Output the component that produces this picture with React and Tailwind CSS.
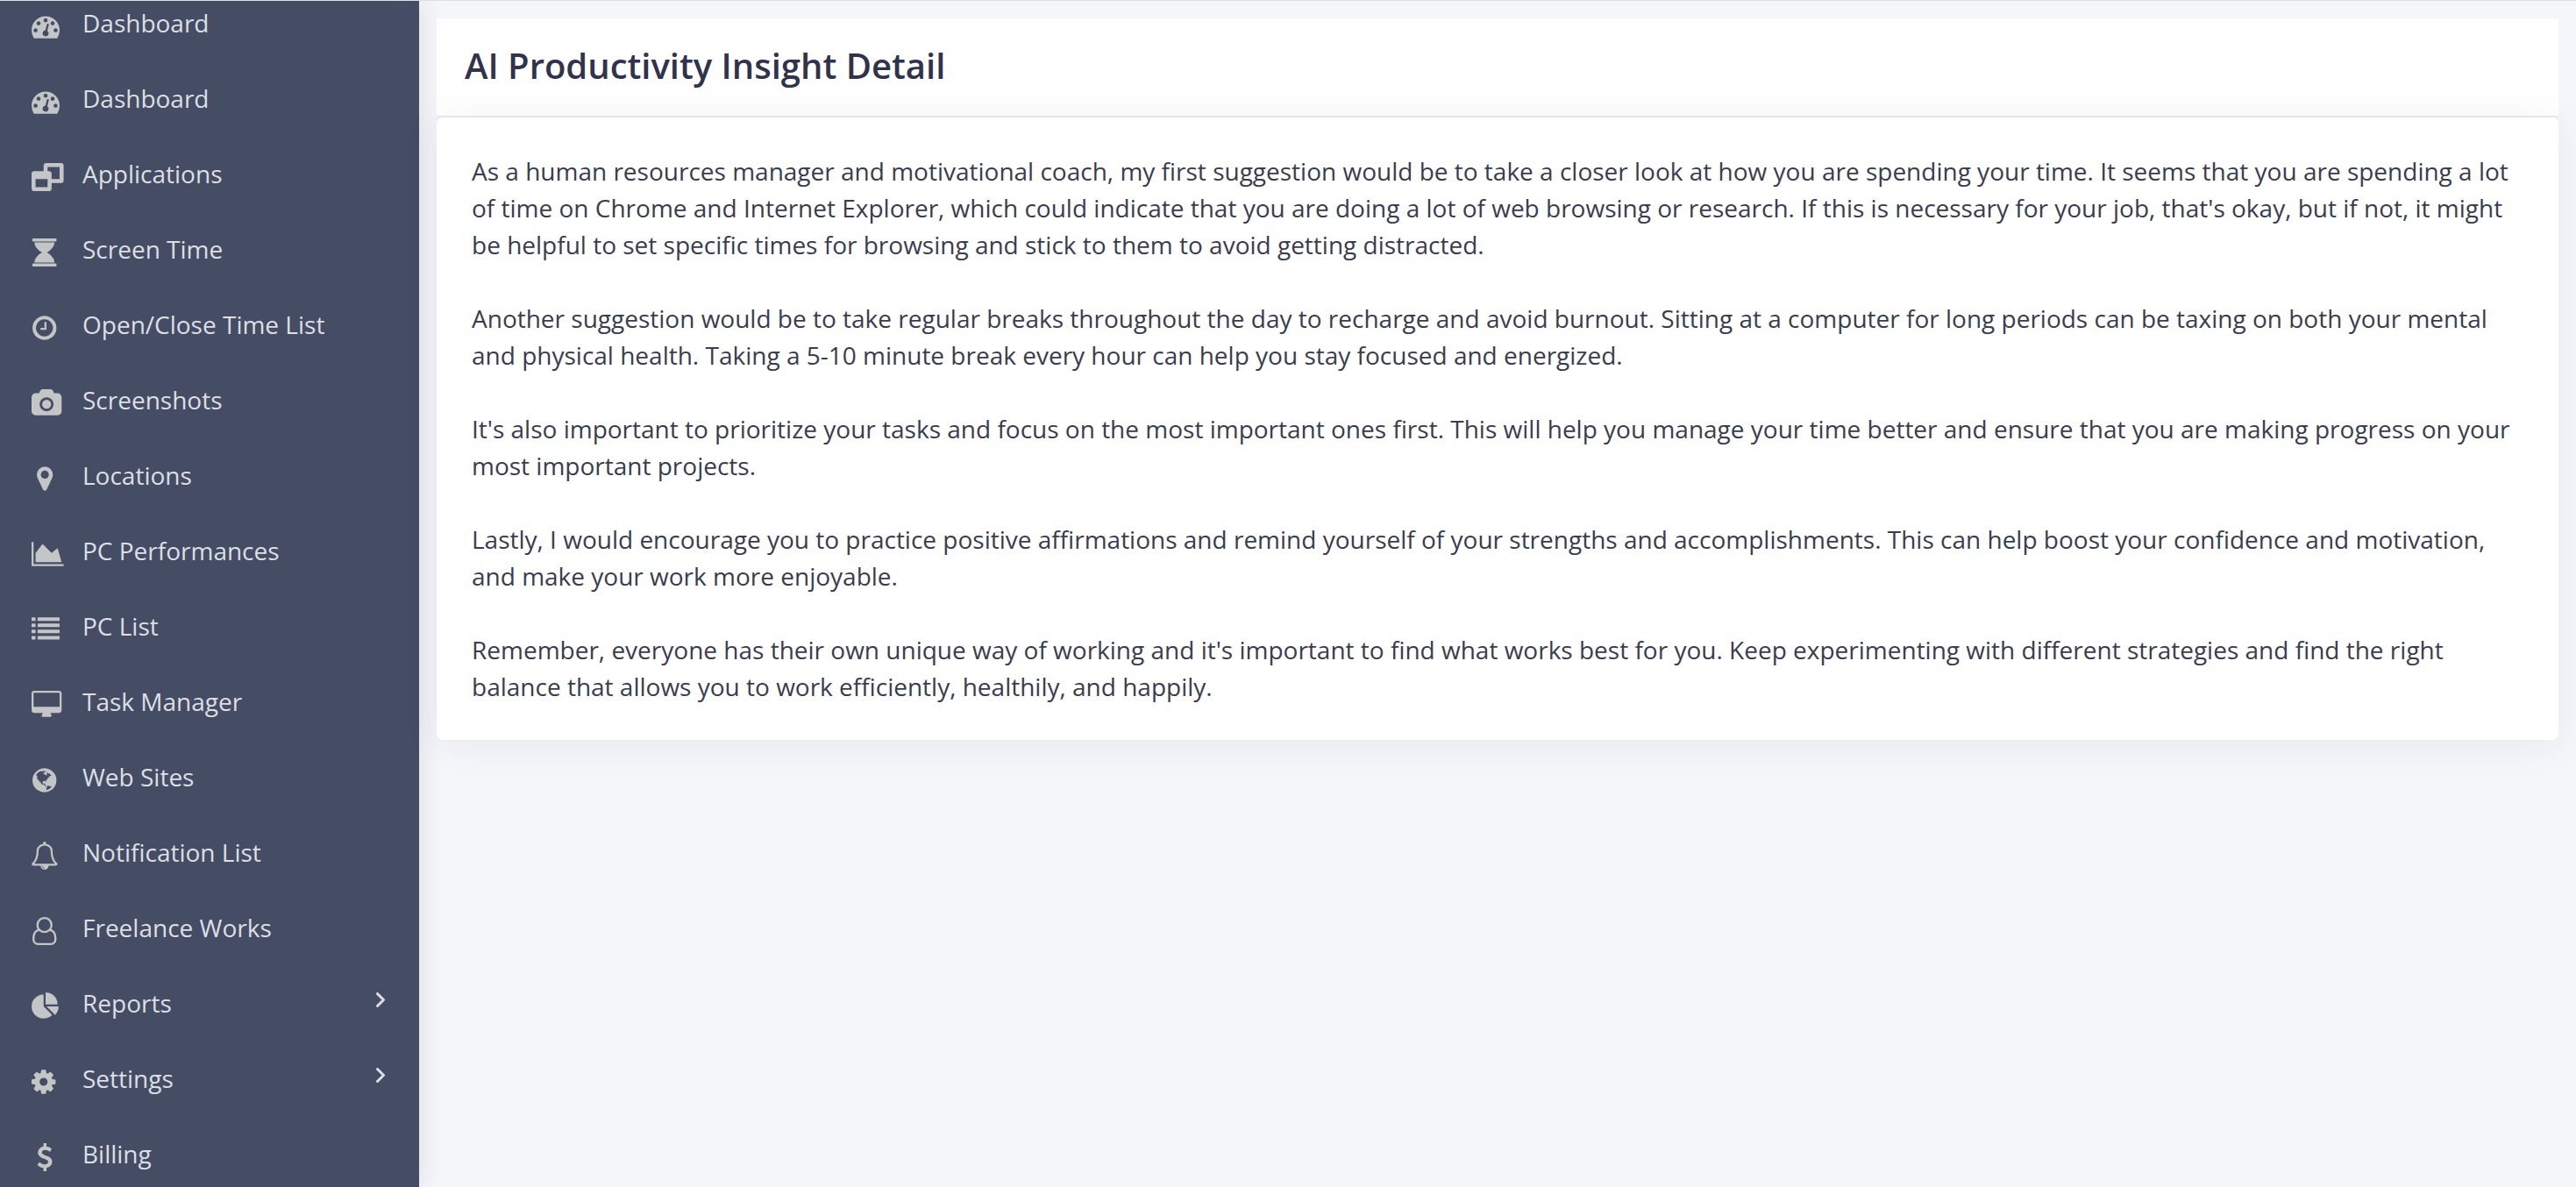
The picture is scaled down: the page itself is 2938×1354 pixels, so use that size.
import React from 'react';

// Icon outlines drawn on a 1792-unit em, 56 units per pixel at 32px
const icons = {
  tachometer: {
    width: 1792,
    d: 'M384 1152q0-53-37.5-90.5t-90.5-37.5-90.5 37.5-37.5 90.5 37.5 90.5 90.5 37.5 90.5-37.5 37.5-90.5zm192-448q0-53-37.5-90.5t-90.5-37.5-90.5 37.5-37.5 90.5 37.5 90.5 90.5 37.5 90.5-37.5 37.5-90.5zm428 481l101-382q6-26-7.5-48.5t-38.5-29.5-48 6.5-30 39.5l-101 382q-60 5-107 43.5t-63 98.5q-20 77 20 146t117 89 146-20 89-117q16-60-6-117t-72-91zm660-33q0-53-37.5-90.5t-90.5-37.5-90.5 37.5-37.5 90.5 37.5 90.5 90.5 37.5 90.5-37.5 37.5-90.5zm-640-640q0-53-37.5-90.5t-90.5-37.5-90.5 37.5-37.5 90.5 37.5 90.5 90.5 37.5 90.5-37.5 37.5-90.5zm448 192q0-53-37.5-90.5t-90.5-37.5-90.5 37.5-37.5 90.5 37.5 90.5 90.5 37.5 90.5-37.5 37.5-90.5zm320 448q0 261-141 483-19 29-54 29h-1402q-35 0-54-29-141-221-141-483 0-182 71-348t191-286 286-191 348-71 348 71 286 191 191 286 71 348z',
  },
  windows: {
    width: 2048,
    d: 'M256 1536h768v-512h-768v512zm1024-512h512v-768h-768v256h96q66 0 113 47t47 113v352zm768-864v960q0 66-47 113t-113 47h-608v352q0 66-47 113t-113 47h-960q-66 0-113-47t-47-113v-960q0-66 47-113t113-47h608v-352q0-66 47-113t113-47h960q66 0 113 47t47 113z',
  },
  hourglass: {
    width: 1536,
    d: 'M1504 1600q14 0 23 9t9 23v128q0 14-9 23t-23 9h-1472q-14 0-23-9t-9-23v-128q0-14 9-23t23-9h1472zm-1374-64q3-55 16-107t30-95 46-87 53.5-76 64.5-69.5 66-60 70.5-55 66.5-47.5 65-43q-43-28-65-43t-66.5-47.5-70.5-55-66-60-64.5-69.5-53.5-76-46-87-30-95-16-107h1276q-3 55-16 107t-30 95-46 87-53.5 76-64.5 69.5-66 60-70.5 55-66.5 47.5-65 43q43 28 65 43t66.5 47.5 70.5 55 66 60 64.5 69.5 53.5 76 46 87 30 95 16 107h-1276zm1374-1536q14 0 23 9t9 23v128q0 14-9 23t-23 9h-1472q-14 0-23-9t-9-23v-128q0-14 9-23t23-9h1472z',
  },
  clock: {
    width: 1536,
    d: 'M896 544v448q0 14-9 23t-23 9h-320q-14 0-23-9t-9-23v-64q0-14 9-23t23-9h224v-352q0-14 9-23t23-9h64q14 0 23 9t9 23zm416 352q0-148-73-273t-198-198-273-73-273 73-198 198-73 273 73 273 198 198 273 73 273-73 198-198 73-273zm224 0q0 209-103 385.5t-279.5 279.5-385.5 103-385.5-103-279.5-279.5-103-385.5 103-385.5 279.5-279.5 385.5-103 385.5 103 279.5 279.5 103 385.5z',
  },
  camera: {
    width: 1920,
    d: 'M960 672q119 0 203.5 84.5t84.5 203.5-84.5 203.5-203.5 84.5-203.5-84.5-84.5-203.5 84.5-203.5 203.5-84.5zm704-416q106 0 181 75t75 181v896q0 106-75 181t-181 75h-1408q-106 0-181-75t-75-181v-896q0-106 75-181t181-75h224l51-136q19-49 69.5-84.5t103.5-35.5h512q53 0 103.5 35.5t69.5 84.5l51 136h224zm-704 1152q185 0 316.5-131.5t131.5-316.5-131.5-316.5-316.5-131.5-316.5 131.5-131.5 316.5 131.5 316.5 316.5 131.5z',
  },
  marker: {
    width: 1024,
    d: 'M768 640q0-106-75-181t-181-75-181 75-75 181 75 181 181 75 181-75 75-181zm256 0q0 109-33 179l-364 774q-16 33-47.5 52t-67.5 19-67.5-19-46.5-52l-365-774q-33-70-33-179 0-212 150-362t362-150 362 150 150 362z',
  },
  areaChart: {
    width: 2048,
    d: 'M2048 1536v128h-2048v-1536h128v1408h1920zm-384-1024l256 896h-1664v-576l448-576 576 576z',
  },
  list: {
    width: 1792,
    d: 'M32 128h192q32 0 32 32v160q0 32-32 32h-192q-32 0-32-32v-160q0-32 32-32zm0 394h192q32 0 32 32v160q0 32-32 32h-192q-32 0-32-32v-160q0-32 32-32zm0 394h192q32 0 32 32v160q0 32-32 32h-192q-32 0-32-32v-160q0-32 32-32zm0 394h192q32 0 32 32v160q0 32-32 32h-192q-32 0-32-32v-160q0-32 32-32zM416 128h1344q32 0 32 32v160q0 32-32 32h-1344q-32 0-32-32v-160q0-32 32-32zm0 394h1344q32 0 32 32v160q0 32-32 32h-1344q-32 0-32-32v-160q0-32 32-32zm0 394h1344q32 0 32 32v160q0 32-32 32h-1344q-32 0-32-32v-160q0-32 32-32zm0 394h1344q32 0 32 32v160q0 32-32 32h-1344q-32 0-32-32v-160q0-32 32-32z',
  },
  desktop: {
    width: 1920,
    d: 'M1792 992v-832q0-13-9.5-22.5t-22.5-9.5h-1600q-13 0-22.5 9.5t-9.5 22.5v832q0 13 9.5 22.5t22.5 9.5h1600q13 0 22.5-9.5t9.5-22.5zm128-832v1088q0 66-47 113t-113 47h-544q0 37 16 77.5t32 71 16 43.5q0 26-19 45t-45 19h-512q-26 0-45-19t-19-45q0-14 16-44t32-70 16-78h-544q-66 0-113-47t-47-113v-1088q0-66 47-113t113-47h1600q66 0 113 47t47 113z',
  },
  globe: {
    width: 1536,
    d: 'M768 128q209 0 385.5 103t279.5 279.5 103 385.5-103 385.5-279.5 279.5-385.5 103-385.5-103-279.5-279.5-103-385.5 103-385.5 279.5-279.5 385.5-103zm274 521q-2 1-9.5 9.5t-13.5 9.5q2 0 4.5-5t5-11 3.5-7q6-7 22-15 14-6 52-12 34-8 51 11-2-2 9.5-13t14.5-12q3-2 15-4.5t15-7.5l2-22q-12 1-17.5-7t-6.5-21q0 2-6 8 0-7-4.5-8t-11.5 1-9 1q-10-3-15-7.5t-8-16.5-4-15q-2-5-9.5-11t-9.5-10q-1-2-2.5-5.5t-3-6.5-4-5.5-5.5-2.5-7 5-7.5 10-4.5 5q-3-2-6-1.5t-4.5 1-4.5 3-5 3.5q-3 2-8.5 3t-8.5 2q15-5-1-11-10-4-16-3 9-4 7.5-12t-8.5-14h5q-1-4-8.5-8.5t-17.5-8.5-13-6q-8-5-34-9.5t-33-.5q-5 6-4.5 10.5t4 14 3.5 12.5q1 6-5.5 13t-6.5 12q0 7 14 15.5t10 21.5q-3 8-16 16t-16 12q-5 8-1.5 18.5t10.5 16.5q2 2 1.5 4t-3.5 4.5-5.5 4-6.5 3.5l-3 2q-11 5-20.5-6t-13.5-26q-7-25-16-30-23-8-29 1-5-13-41-26-25-9-58-4 6-1 0-15-7-15-19-12 3-6 4-17.5t1-13.5q3-13 12-23 1-1 7-8.5t9.5-13.5.5-6q35 4 50-11 5-5 11.5-17t10.5-17q9-6 14-5.5t14.5 5.5 14.5 5q14 1 15.5-11t-7.5-20q12 1 3-17-4-7-8-9-12-4-27 5-8 4 2 8-1-1-9.5 10.5t-16.5 17.5-16-5q-1-1-5.5-13.5t-9.5-13.5q-8 0-16 15 3-8-11-15t-24-8q19-12-8-27-7-4-20.5-5t-19.5 4q-5 7-5.5 11.5t5 8 10.5 5.5 11.5 4 8.5 3q14 10 8 14-2 1-8.5 3.5t-11.5 4.5-6 4q-3 4 0 14t-2 14q-5-5-9-17.5t-7-16.5q7 9-25 6l-10-1q-4 0-16 2t-20.5 1-13.5-8q-4-8 0-20 1-4 4-2-4-3-11-9.5t-10-8.5q-46 15-94 41 6 1 12-1 5-2 13-6.5t10-5.5q34-14 42-7l5-5q14 16 20 25-7-4-30-1-20 6-22 12 7 12 5 18-4-3-11.5-10t-14.5-11-15-5q-16 0-22 1-146 80-235 222 7 7 12 8 4 1 5 9t2.5 11 11.5-3q9 8 3 19 1-1 44 27 19 17 21 21 3 11-10 18-1-2-9-9t-9-4q-3 5 .5 18.5t10.5 12.5q-7 0-9.5 16t-2.5 35.5-1 23.5l2 1q-3 12 5.5 34.5t21.5 19.5q-13 3 20 43 6 8 8 9 3 2 12 7.5t15 10 10 10.5q4 5 10 22.5t14 23.5q-2 6 9.5 20t10.5 23q-1 0-2.5 1t-2.5 1q3 7 15.5 14t15.5 13q1 3 2 10t3 11 8 2q2-20-24-62-15-25-17-29-3-5-5.5-15.5t-4.5-14.5q2 0 6 1.5t8.5 3.5 7.5 4 2 3q-3 7 2 17.5t12 18.5 17 19 12 13q6 6 14 19.5t0 13.5q9 0 20 10.5t17 19.5q5 8 8 26t5 24q2 7 8.5 13.5t12.5 9.5l16 8 13 7q5 2 18.5 10.5t21.5 11.5q10 4 16 4t14.5-2.5 13.5-3.5q15-2 29 15t21 21q36 19 55 11-2 1 .5 7.5t8 15.5 9 14.5 5.5 8.5q5 6 18 15t18 15q6-4 7-9-3 8 7 20t18 10q14-3 14-32-31 15-49-18 0-1-2.5-5.5t-4-8.5-2.5-8.5 0-7.5 5-3q9 0 10-3.500t-2-12.500-4-13q-1-8-11-20t-12-15q-5 9-16 8t-16-9q0 1-1.5 5.5t-1.5 6.5q-13 0-15-1 1-3 2.500-17.500t3.500-22.500q1-4 5.500-12t7.500-14.500 4-12.500-4.500-9.500-17.500-2.500q-19 1-26 20-1 3-3 10.500t-5 11.500-9 7q-7 3-24 2t-24-5q-13-8-22.500-29t-9.500-37q0-10 2.500-26.500t3-25-5.500-24.500q3-2 9-9.500t10-10.500q2-1 4.500-1.500t4.500 0 4-1.500 3-6q-1-1-4-3-3-3-4-3 7 3 28.500-1.500t27.500 1.500q15 11 22-2 0-1-2.500-9.500t-.5-13.500q5 27 29 9 3 3 15.500 5t17.500 5q3 2 7 5.500t5.500 4.500 5-.5 8.500-6.500q10 14 12 24 11 40 19 44 7 3 11 2t4.500-9.500 0-14-1.500-12.500l-1-8v-18l-1-8q-15-3-18.500-12t1.500-18.500 15-18.500q1-1 8-3.500t15.500-6.500 12.500-8q21-19 15-35 7 0 11-9-1 0-5-3t-7.500-5-4.500-2q9-5 2-16 5-3 7.500-11t7.500-10q9 12 21 2 8-8 1-16 5-7 20.500-10.500t18.500-9.500q7 2 8-2t1-12 3-12q4-5 15-9t13-5l17-11q3-4 0-4 18 2 31-11 10-11-6-20 3-6-3-9.500t-15-5.500q3-1 11.500-.5t10.500-1.500q15-10-7-16-17-5-43 12zm-163 877q206-36 351-189-3-3-12.500-4.500t-12.500-3.500q-18-7-24-8 1-7-2.500-13t-8-9-12.500-8-11-7q-2-2-7-6t-7-5.500-7.500-4.500-8.500-2-10 1l-3 1q-3 1-5.500 2.500t-5.500 3-4 3 0 2.500q-21-17-36-22-5-1-11-5.500t-10.500-7-10-1.500-11.500 7q-5 5-6 15t-2 13q-7-5 0-17.500t2-18.500q-3-6-10.500-4.500t-12 4.500-11.500 8.500-9 6.500-8.500 5.500-8.500 7.500q-3 4-6 12t-5 11q-2-4-11.500-6.500t-9.500-5.500q2 10 4 35t5 38q7 31-12 48-27 25-29 40-4 22 12 26 0 7-8 20.500t-7 21.500q0 6 2 16z',
  },
  bell: {
    width: 1664,
    left: 64,
    d: 'M912 1696q0-16-16-16-59 0-101.5-42.5t-42.5-101.5q0-16-16-16t-16 16q0 73 51.5 124.5t124.5 51.5q16 0 16-16zm-666-288h1300q-266-300-266-832 0-51-24-105t-69-103-121.5-80.5-169.5-31.5-169.5 31.5-121.5 80.5-69 103-24 105q0 532-266 832zm1482 0q0 52-38 90t-90 38h-448q0 106-75 181t-181 75-181-75-75-181h-448q-52 0-90-38t-38-90q50-42 91-88t85-119.5 74.5-158.5 50-206 19.5-260q0-152 117-282.5t307-158.5q-8-19-8-39 0-40 28-68t68-28 68 28 28 68q0 20-8 39 190 28 307 158.5t117 282.5q0 139 19.5 260t50 206 74.5 158.5 85 119.5 91 88z',
  },
  user: {
    width: 1536,
    d: 'M1201 784q47 14 89.5 38t89 73 79.5 115.5 55 172 22 236.5q0 154-100 263.5t-241 109.5h-854q-141 0-241-109.5t-100-263.5q0-131 22-236.5t55-172 79.5-115.5 89-73 89.5-38q-79-125-79-272 0-104 40.5-198.5t109.5-163.5 163.5-109.5 198.5-40.5 198.5 40.5 163.5 109.5 109.5 163.5 40.5 198.5q0 147-79 272zm-433-656q-159 0-271.5 112.5t-112.5 271.5 112.5 271.5 271.5 112.5 271.5-112.5 112.5-271.5-112.5-271.5-271.5-112.5zm427 1536q88 0 150.5-71.5t62.5-173.5q0-239-78.5-377t-225.5-145q-145 127-336 127t-336-127q-147 7-225.5 145t-78.5 377q0 102 62.5 173.5t150.5 71.5h854z',
  },
  pieChart: {
    width: 1792,
    d: 'M768 890l546 546q-106 108-247.5 168t-298.5 60q-209 0-385.5-103t-279.5-279.5-103-385.5 103-385.5 279.5-279.5 385.5-103v762zm187 6h773q0 157-60 298.5t-168 247.5zm709-128h-768v-768q209 0 385.5 103t279.5 279.5 103 385.5z',
  },
  cog: {
    width: 1664,
    left: 128,
    d: 'M1152 896q0-106-75-181t-181-75-181 75-75 181 75 181 181 75 181-75 75-181zm512-109v222q0 12-8 23t-20 13l-185 28q-19 54-39 91 35 50 107 138 10 12 10 25t-9 23q-27 37-99 108t-94 71q-12 0-26-9l-138-108q-44 23-91 38-16 136-29 186-7 28-36 28h-222q-14 0-24.5-8.5t-11.5-21.5l-28-184q-49-16-90-37l-141 107q-10 9-25 9-14 0-25-11-126-114-165-168-7-10-7-23 0-12 8-23 15-21 51-66.5t54-70.5q-27-50-41-99l-183-27q-13-2-21-12.5t-8-23.5v-222q0-12 8-23t19-13l186-28q14-46 39-92-40-57-107-138-10-12-10-24 0-10 9-23 26-36 98.5-107.5t94.5-71.5q13 0 26 10l138 107q44-23 91-38 16-136 29-186 7-28 36-28h222q14 0 24.5 8.5t11.5 21.5l28 184q49 16 90 37l142-107q9-9 24-9 13 0 25 10 129 119 165 170 7 8 7 22 0 12-8 23-15 21-51 66.5t-54 70.5q26 50 41 98l183 28q13 2 21 12.5t8 23.5z',
  },
  dollar: {
    width: 1024,
    left: 384,
    d: 'M1362 1185q0 153-99.5 263.5t-258.5 136.5v175q0 14-9 23t-23 9h-135q-13 0-22.5-9.5t-9.5-22.5v-175q-66-9-127.5-31t-101.5-44.5-74-48-46.5-37.5-17.5-18q-17-21-2-41l103-135q7-10 23-12 15-2 24 9l2 2q113 99 243 125 37 8 74 8 81 0 142.5-43t61.5-122q0-28-15-53t-33.5-42-58.5-37.5-66-32-80-32.5q-39-16-61.5-25t-61.5-26.5-62.5-31-56.5-35.5-53.5-42.5-43.5-49-35.5-58-21-66.5-8.5-78q0-138 98-242t255-134v-180q0-13 9.5-22.5t22.5-9.5h135q14 0 23 9t9 23v176q57 6 110.5 23t87 33.5 63.5 37.5 39 29 15 14q17 18 5 38l-81 146q-8 15-23 16-14 3-27-7-3-3-14.5-12t-39-26.5-58.5-32-74.5-26-85.5-11.5q-95 0-155 43t-60 111q0 26 8.5 48t29.5 41.5 39.5 33 56 31 60.5 27 70 27.5q53 20 81 31.5t76 35 75.5 42.5 62 50 53 63.5 31.5 76.5 13 94z',
  },
};

const menu = [
  { label: 'Dashboard', icon: 'tachometer' },
  { label: 'Dashboard', icon: 'tachometer' },
  { label: 'Applications', icon: 'windows' },
  { label: 'Screen Time', icon: 'hourglass' },
  { label: 'Open/Close Time List', icon: 'clock' },
  { label: 'Screenshots', icon: 'camera' },
  { label: 'Locations', icon: 'marker' },
  { label: 'PC Performances', icon: 'areaChart' },
  { label: 'PC List', icon: 'list' },
  { label: 'Task Manager', icon: 'desktop' },
  { label: 'Web Sites', icon: 'globe' },
  { label: 'Notification List', icon: 'bell' },
  { label: 'Freelance Works', icon: 'user' },
  { label: 'Reports', icon: 'pieChart', hasChildren: true },
  { label: 'Settings', icon: 'cog', hasChildren: true },
  { label: 'Billing', icon: 'dollar' },
];

const insight = [
  "As a human resources manager and motivational coach, my first suggestion would be to take a closer look at how you are spending your time. It seems that you are spending a lot of time on Chrome and Internet Explorer, which could indicate that you are doing a lot of web browsing or research. If this is necessary for your job, that's okay, but if not, it might be helpful to set specific times for browsing and stick to them to avoid getting distracted.",
  'Another suggestion would be to take regular breaks throughout the day to recharge and avoid burnout. Sitting at a computer for long periods can be taxing on both your mental and physical health. Taking a 5-10 minute break every hour can help you stay focused and energized.',
  "It's also important to prioritize your tasks and focus on the most important ones first. This will help you manage your time better and ensure that you are making progress on your most important projects.",
  'Lastly, I would encourage you to practice positive affirmations and remind yourself of your strengths and accomplishments. This can help boost your confidence and motivation, and make your work more enjoyable.',
  "Remember, everyone has their own unique way of working and it's important to find what works best for you. Keep experimenting with different strategies and find the right balance that allows you to work efficiently, healthily, and happily.",
];

function MenuIcon({ name }) {
  const { width, left = 0, d } = icons[name];
  return (
    <span className="w-[30px] shrink-0 pt-2 text-center text-[#c4c5c6] whitespace-nowrap leading-none">
      <svg
        className="inline-block h-8 overflow-visible fill-current align-top"
        viewBox={`${left} 0 ${width} 1792`}
        aria-hidden="true"
      >
        <path d={d} />
      </svg>
    </span>
  );
}

function MenuItem({ item }) {
  const row = 'flex h-[86px] w-full items-center pl-9 pr-[39px] text-left';
  const content = (
    <>
      <MenuIcon name={item.icon} />
      <span className="ml-7 text-[28px] leading-[42px]">{item.label}</span>
    </>
  );

  if (item.hasChildren) {
    return (
      <button type="button" className={row}>
        {content}
        <span className="ml-auto pb-2">
          <svg className="block h-[17px] w-[10px]" viewBox="0 0 10 17" fill="none" stroke="currentColor" strokeWidth="3" aria-hidden="true">
            <path d="M1.5 1.5l7 7-7 7" strokeLinecap="round" />
          </svg>
        </span>
      </button>
    );
  }
  return <a href="#" className={row}>{content}</a>;
}

export default function App() {
  return (
    <div className="flex h-screen flex-col overflow-hidden border-t border-[#dddfe3] bg-[#f5f6fa] font-['Open_Sans',sans-serif]">
      <div className="flex min-h-0 flex-1">
        <aside className="w-[478px] shrink-0 bg-[#444d63] text-[#dcdfe5] shadow-[0_0_26px_rgba(60,60,80,0.14)]">
          {/* menu is scrolled a little past its first row */}
          <nav className="-mt-[18px]">
            <ul>
              {menu.map((item, i) => (
                <li key={i}><MenuItem item={item} /></li>
              ))}
            </ul>
          </nav>
        </aside>

        <main className="min-w-0 flex-1 p-5">
          <header className="border-b-2 border-[#ebecef] bg-white px-8 pt-6 pb-[27px]">
            <h1 className="text-[40px] leading-[60px] font-semibold text-[#30334a]">AI Productivity Insight Detail</h1>
          </header>
          <article className="flex flex-col gap-[42px] rounded-lg bg-white p-10 text-[28px] leading-[42px] text-[#3a3d4d] shadow-[0_4px_44px_rgba(40,40,80,0.07)]">
            {insight.map((text, i) => <p key={i}>{text}</p>)}
          </article>
        </main>
      </div>
    </div>
  );
}
